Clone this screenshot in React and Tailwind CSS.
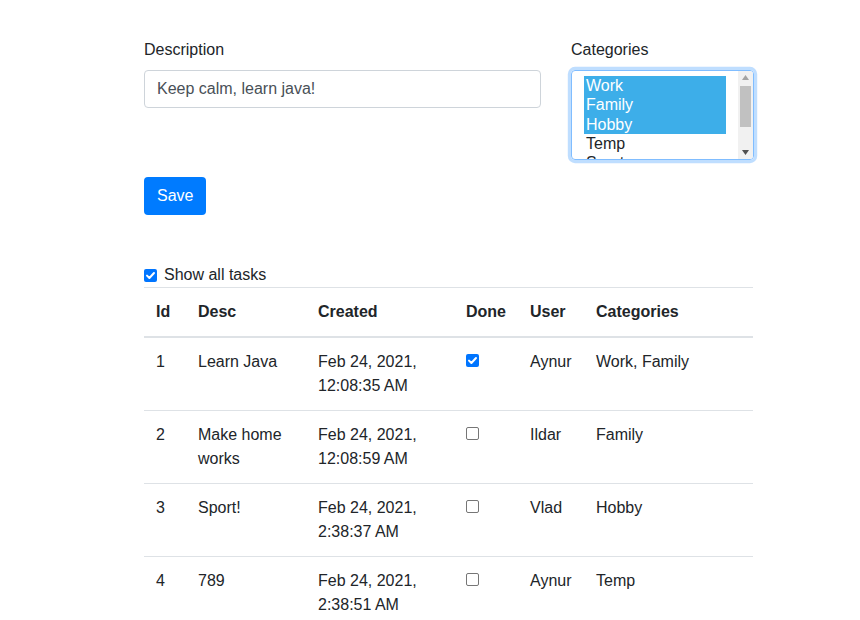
import React from "react";

function Check({ checked }) {
  if (checked) {
    return (
      <span className="flex h-[13px] w-[13px] items-center justify-center rounded-[2px] bg-[#0075ff]">
        <svg width="13" height="13" viewBox="0 0 13 13">
          <polyline points="3,6.6 5.4,9 10,4" fill="none" stroke="#fff" strokeWidth="2" strokeLinecap="round" strokeLinejoin="round" />
        </svg>
      </span>
    );
  }
  return <span className="block h-[13px] w-[13px] rounded-[2px] border border-[#767676] bg-white" />;
}

const rows = [
  { id: 1, desc: "Learn Java", d1: "Feb 24, 2021,", d2: "12:08:35 AM", done: true, user: "Aynur", cats: "Work, Family" },
  { id: 2, desc: "Make home works", d1: "Feb 24, 2021,", d2: "12:08:59 AM", done: false, user: "Ildar", cats: "Family" },
  { id: 3, desc: "Sport!", d1: "Feb 24, 2021,", d2: "2:38:37 AM", done: false, user: "Vlad", cats: "Hobby" },
  { id: 4, desc: "789", d1: "Feb 24, 2021,", d2: "2:38:51 AM", done: false, user: "Aynur", cats: "Temp" },
];

export default function App() {
  return (
    <div className="min-h-[620px] bg-white font-['Liberation_Sans',Arial,sans-serif] text-[16px] leading-6 text-[#212529]">
      <div className="ml-[144px] w-[610px] pt-[38px]">
        <div className="flex gap-[30px]">
          <div className="w-[397px] shrink-0">
            <div className="mb-2">Description</div>
            <div className="flex h-[38px] items-center rounded border border-[#ced4da] px-3 text-[#495057]">
              Keep calm, learn java!
            </div>
          </div>
          <div className="w-[183px] shrink-0">
            <div className="mb-2">Categories</div>
            <div className="flex h-[90px] overflow-hidden rounded border border-[#80bdff] shadow-[0_0_0_3.2px_rgba(0,123,255,0.25)]">
              <div className="flex-1 overflow-hidden px-3 pt-[5px] leading-[19.33px] text-[#212529]">
                <div className="bg-[#3daee9] px-[2px] text-white">Work</div>
                <div className="bg-[#3daee9] px-[2px] text-white">Family</div>
                <div className="bg-[#3daee9] px-[2px] text-white">Hobby</div>
                <div className="px-[2px]">Temp</div>
                <div className="px-[2px]">Sport</div>
              </div>
              <div className="relative w-[15px] shrink-0 bg-[#f1f1f1]">
                <svg className="absolute left-[4px] top-[4px]" width="7" height="5" viewBox="0 0 7 5">
                  <polygon points="0,5 3.5,0 7,5" fill="#a3a3a3" />
                </svg>
                <div className="absolute left-[2px] top-[15px] h-[41px] w-[11px] bg-[#c1c1c1]" />
                <svg className="absolute bottom-[4px] left-[4px]" width="7" height="5" viewBox="0 0 7 5">
                  <polygon points="0,0 7,0 3.5,5" fill="#505050" />
                </svg>
              </div>
            </div>
          </div>
        </div>

        <button className="mt-[17px] h-[38px] rounded bg-[#007bff] px-[13px] text-white">Save</button>

        <div className="mt-[48px] flex h-6 items-center">
          <Check checked />
          <span className="ml-[7px]">Show all tasks</span>
        </div>

        <table className="w-[609px] table-fixed border-collapse">
          <colgroup>
            <col className="w-[42px]" />
            <col className="w-[120px]" />
            <col className="w-[148px]" />
            <col className="w-[64px]" />
            <col className="w-[66px]" />
            <col className="w-[169px]" />
          </colgroup>
          <thead>
            <tr className="border-t border-b-2 border-[#dee2e6] text-left font-bold">
              <th className="p-3 align-bottom">Id</th>
              <th className="p-3 align-bottom">Desc</th>
              <th className="p-3 align-bottom">Created</th>
              <th className="p-3 align-bottom">Done</th>
              <th className="p-3 align-bottom">User</th>
              <th className="p-3 align-bottom">Categories</th>
            </tr>
          </thead>
          <tbody>
            {rows.map((r) => (
              <tr key={r.id} className="border-b border-[#dee2e6]">
                <td className="p-3 align-top">{r.id}</td>
                <td className="p-3 align-top">{r.desc}</td>
                <td className="p-3 align-top">
                  {r.d1}
                  <br />
                  {r.d2}
                </td>
                <td className="p-3 align-top">
                  <div className="pt-1">
                    <Check checked={r.done} />
                  </div>
                </td>
                <td className="p-3 align-top">{r.user}</td>
                <td className="p-3 align-top">{r.cats}</td>
              </tr>
            ))}
          </tbody>
        </table>
      </div>
    </div>
  );
}
